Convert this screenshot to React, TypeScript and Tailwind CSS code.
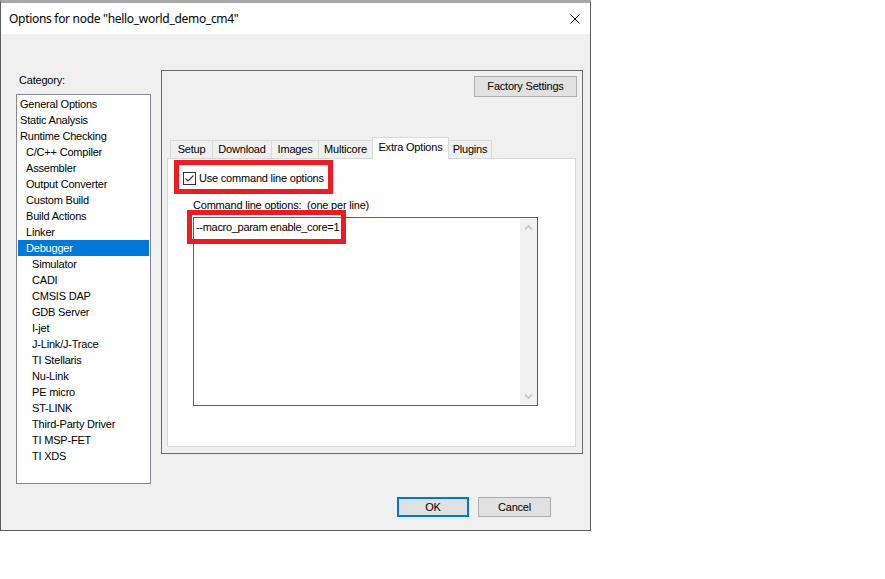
import React from 'react'

// category tree: [label, indent level]
const categories: [string, number][] = [
  ['General Options', 0],
  ['Static Analysis', 0],
  ['Runtime Checking', 0],
  ['C/C++ Compiler', 1],
  ['Assembler', 1],
  ['Output Converter', 1],
  ['Custom Build', 1],
  ['Build Actions', 1],
  ['Linker', 1],
  ['Debugger', 1],
  ['Simulator', 2],
  ['CADI', 2],
  ['CMSIS DAP', 2],
  ['GDB Server', 2],
  ['I-jet', 2],
  ['J-Link/J-Trace', 2],
  ['TI Stellaris', 2],
  ['Nu-Link', 2],
  ['PE micro', 2],
  ['ST-LINK', 2],
  ['Third-Party Driver', 2],
  ['TI MSP-FET', 2],
  ['TI XDS', 2],
]

const indent = ['pl-[2px]', 'pl-[8px]', 'pl-[14px]']

function CategoryList() {
  return (
    <div className="mt-[6px] h-[390px] border border-[#828790] bg-white pt-px px-px">
      {categories.map(([label, level]) => {
        const selected = label === 'Debugger'
        return (
          <div
            key={label}
            className={`h-[16px] leading-[16px] whitespace-nowrap ${indent[level]} ${
              selected ? 'bg-[#0078d7] text-white' : 'text-black'
            }`}
          >
            {label}
          </div>
        )
      })}
    </div>
  )
}

function Tabs() {
  return (
    <div className="flex items-end h-[21px] ml-[8px]">
      <div className="w-[42px] h-[18px] border-l border-t border-[#d9d9d9] flex items-center justify-center">Setup</div>
      <div className="w-[59px] h-[18px] border-l border-t border-[#d9d9d9] flex items-center justify-center">Download</div>
      <div className="w-[47px] h-[18px] border-l border-t border-[#d9d9d9] flex items-center justify-center">Images</div>
      <div className="w-[54px] h-[18px] border-l border-t border-[#d9d9d9] flex items-center justify-center">Multicore</div>
      <div className="relative z-10 -mb-px w-[77px] h-[22px] pb-[2px] border-l border-t border-r border-[#d9d9d9] bg-white flex items-center justify-center">
        Extra Options
      </div>
      <div className="w-[43px] h-[18px] border-t border-r border-[#d9d9d9] flex items-center justify-center">Plugins</div>
    </div>
  )
}

function Chevron({ down }: { down?: boolean }) {
  return (
    <svg width="9" height="6" viewBox="0 0 9 6">
      <path
        d={down ? 'M1 1.5 L4.5 5 L8 1.5' : 'M1 4.5 L4.5 1 L8 4.5'}
        fill="none"
        stroke="#c2c2c2"
        strokeWidth="1.6"
      />
    </svg>
  )
}

export default function App() {
  return (
    <div
      className="relative w-[885px] h-[579px] bg-white overflow-hidden text-[11px] tracking-[-0.2px] text-black"
      style={{ fontFamily: '"Liberation Sans", Arial, sans-serif' }}
    >
      {/* Dialog window */}
      <div className="flex flex-col w-[591px] h-[531px] border-x border-b border-[#5c5c5c] border-t-[3px] border-t-[#a9a9a9]">
        {/* Title bar */}
        <div className="shrink-0 h-[31px] bg-white flex items-center justify-between pl-[8px] pr-[10px]">
          <span
            className="text-[12px] tracking-[-0.3px]"
            style={{ fontFamily: '"Noto Sans", "Liberation Sans", sans-serif' }}
          >
            Options for node "hello_world_demo_cm4"
          </span>
          <svg width="10" height="10" viewBox="0 0 10 10">
            <path d="M0.5 0.5 L9.5 9.5 M9.5 0.5 L0.5 9.5" stroke="#000" strokeWidth="1" />
          </svg>
        </div>

        {/* Body */}
        <div className="flex-1 flex flex-col bg-[#f0f0f0] pl-[15px] pt-[36px]">
          <div className="flex items-start gap-[10px]">
            {/* Category column */}
            <div className="w-[135px] pt-[2px]">
              <div className="h-[16px] leading-[16px] pl-[3px]">Category:</div>
              <CategoryList />
            </div>

            {/* Options group */}
            <div className="w-[422px] h-[384px] border border-[#6a6a6a] flex flex-col">
              <button className="self-end mt-[5px] mr-[5px] w-[103px] h-[21px] bg-[#e1e1e1] border border-[#adadad]">
                Factory Settings
              </button>

              <div className="mt-[40px]">
                <Tabs />
                <div className="ml-[5px] w-[409px] h-[289px] border border-[#d9d9d9] bg-white">
                  <div className="flex items-center mt-[13px] ml-[15px]">
                    <div className="w-[13px] h-[13px] border border-[#333] bg-white flex items-center justify-center">
                      <svg width="11" height="11" viewBox="0 0 11 11">
                        <path d="M1.5 5.5 L4 8 L9.5 2.5" fill="none" stroke="#333" strokeWidth="1.1" />
                      </svg>
                    </div>
                    <span className="ml-[3px] leading-[13px]">Use command line options</span>
                  </div>

                  <div className="mt-[14px] ml-[25px] leading-[13px]">Command line options:&nbsp; (one per line)</div>

                  <div className="mt-[5px] ml-[25px] w-[345px] h-[189px] border border-[#0078d7] flex">
                    <div className="flex-1 pl-[2px] pt-[3px] leading-[13px] tracking-[-0.3px]">
                      --macro_param enable_core=1
                    </div>
                    <div className="w-[17px] my-px bg-[#f0f0f0] flex flex-col justify-between">
                      <div className="h-[17px] flex items-center justify-center">
                        <Chevron />
                      </div>
                      <div className="h-[17px] flex items-center justify-center">
                        <Chevron down />
                      </div>
                    </div>
                  </div>
                </div>
              </div>
            </div>
          </div>

          {/* Dialog buttons */}
          <div className="flex justify-end gap-[9px] mt-[13px] pr-[39px]">
            <button className="w-[72px] h-[20px] bg-[#e1e1e1] border-2 border-[#0078d7]">OK</button>
            <button className="w-[73px] h-[20px] bg-[#e1e1e1] border border-[#adadad]">Cancel</button>
          </div>
        </div>
      </div>

      {/* Red annotation frames */}
      <div className="absolute left-[174px] top-[160px] w-[159px] h-[34px] border-[5px] border-[#ed1c24]" />
      <div className="absolute left-[187px] top-[210px] w-[159px] h-[34px] border-[5px] border-[#ed1c24]" />
    </div>
  )
}
